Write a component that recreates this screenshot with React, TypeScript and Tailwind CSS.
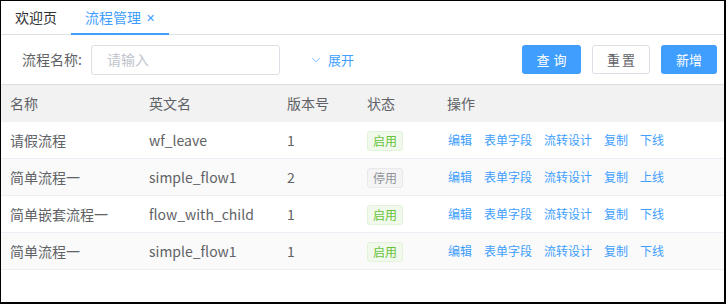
import { ChevronDown } from 'lucide-react';

const rows = [
  { name: '请假流程', key: 'wf_leave', version: 1, enabled: true },
  { name: '简单流程一', key: 'simple_flow1', version: 2, enabled: false },
  { name: '简单嵌套流程一', key: 'flow_with_child', version: 1, enabled: true },
  { name: '简单流程一', key: 'simple_flow1', version: 1, enabled: true },
];

const font = { fontFamily: "'Noto Sans CJK SC', 'Noto Sans', sans-serif" };

export default function App() {
  return (
    <div
      className="w-[726px] h-[304px] box-border border-l border-t border-r-2 border-b-2 border-black bg-white overflow-hidden"
      style={font}
    >
      {/* Tabs */}
      <div className="flex h-[34px] border-b border-[#dcdfe6]">
        <div className="px-[14px] flex items-center text-[14px] text-[#303133]">欢迎页</div>
        <div className="px-[14px] flex items-center text-[14px] text-[#409eff] border-b-2 border-[#409eff] h-[34px]">
          流程管理
          <span className="ml-[5px] text-[11px] text-[#409eff]">✕</span>
        </div>
      </div>

      {/* Filter */}
      <div className="flex items-center h-[50px] border-b border-[#dcdfe6] pr-[7px]">
        <span className="ml-[21px] text-[14px] text-[#606266]">流程名称:</span>
        <div className="ml-[9px] w-[189px] h-[30px] border border-[#dcdfe6] rounded-[3px] flex items-center px-[15px] text-[14px] text-[#c0c4cc]">
          请输入
        </div>
        <div className="ml-[29px] flex items-center text-[13px] text-[#409eff]">
          <ChevronDown size={14} strokeWidth={1.2} className="mr-[5px]" />
          展开
        </div>
        <div className="ml-auto flex gap-[11px]">
          <button className="w-[59px] h-[29px] rounded-[3px] bg-[#409eff] text-white text-[13px] tracking-[4px] pl-[4px]">查询</button>
          <button className="w-[58px] h-[29px] rounded-[3px] border border-[#dcdfe6] bg-white text-[#606266] text-[13px] tracking-[2px] pl-[2px]">重置</button>
          <button className="w-[56px] h-[29px] rounded-[3px] bg-[#409eff] text-white text-[13px]">新增</button>
        </div>
      </div>

      {/* Table */}
      <div className="grid grid-cols-[139px_138px_80px_80px_1fr] h-[37px] items-center bg-[#f2f2f2] text-[14px] text-[#606266]">
        <div className="pl-[9px]">名称</div>
        <div className="pl-[9px]">英文名</div>
        <div className="pl-[9px]">版本号</div>
        <div className="pl-[9px]">状态</div>
        <div className="pl-[9px]">操作</div>
      </div>
      {rows.map((r, i) => (
        <div
          key={i}
          className={`grid grid-cols-[139px_138px_80px_80px_1fr] h-[37px] items-center border-b border-[#ebeef5] text-[14px] text-[#606266] ${i % 2 === 1 ? 'bg-[#fafafa]' : 'bg-white'}`}
        >
          <div className="pl-[9px]">{r.name}</div>
          <div className="pl-[9px]">{r.key}</div>
          <div className="pl-[9px]">{r.version}</div>
          <div className="pl-[9px]">
            {r.enabled ? (
              <span className="inline-flex items-center justify-center w-[36px] h-[20px] rounded-[3px] border border-[#e1f3d8] bg-[#f0f9eb] text-[12px] text-[#67c23a]">启用</span>
            ) : (
              <span className="inline-flex items-center justify-center w-[36px] h-[20px] rounded-[3px] border border-[#e9e9eb] bg-[#f4f4f5] text-[12px] text-[#909399]">停用</span>
            )}
          </div>
          <div className="pl-[10px] flex gap-[12px] text-[12px] text-[#409eff]">
            <span>编辑</span>
            <span>表单字段</span>
            <span>流转设计</span>
            <span>复制</span>
            <span>{r.enabled ? '下线' : '上线'}</span>
          </div>
        </div>
      ))}
    </div>
  );
}
